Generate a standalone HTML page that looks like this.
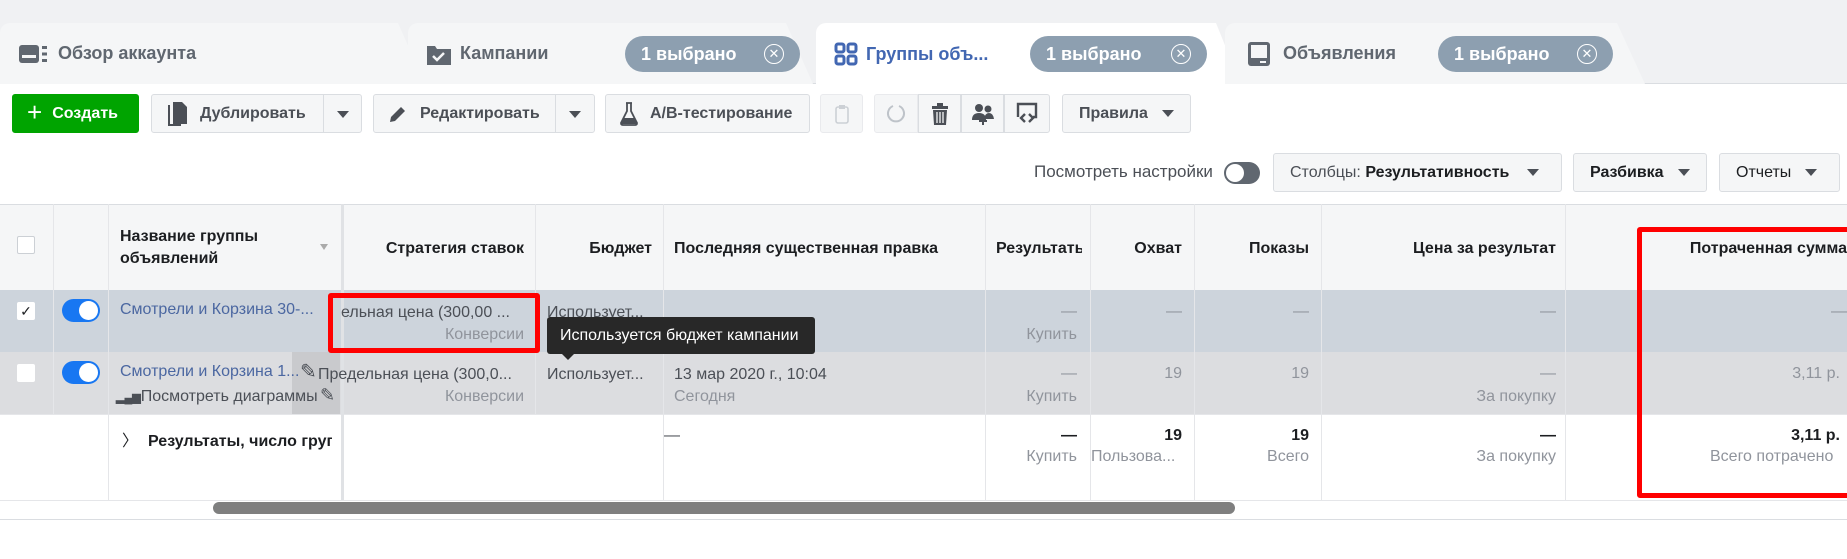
<!DOCTYPE html>
<html><head><meta charset="utf-8"><style>
*{box-sizing:border-box;margin:0;padding:0}
body{width:1847px;height:559px;overflow:hidden;background:#fff;font-family:"Liberation Sans",Arial,sans-serif;color:#1c1e21;position:relative}
.a{position:absolute}
.strip{left:0;top:0;width:1847px;height:84px;background:#f0f1f3;border-bottom:1px solid #dadde1}
.tab{top:23px;height:61px;background:#f5f6f7;border-radius:10px 10px 0 0;display:flex;align-items:center;font-size:18px;font-weight:bold;color:#606770}
.pill{top:36px;height:36px;border-radius:18px;background:#8d9fb0;color:#fff;font-size:18px;font-weight:bold;display:flex;align-items:center;padding-left:16px}
.pill .x{position:absolute;right:16px;top:8px;width:20px;height:20px;border:1.5px solid #fff;border-radius:50%;font-size:13px;line-height:17px;text-align:center;font-weight:normal}
.btn{top:94px;height:39px;background:#f5f6f7;border:1px solid #dadde1;border-radius:3px;display:flex;align-items:center;font-size:16px;font-weight:bold;color:#4b4f56}
.tri{display:inline-block;width:0;height:0;border-left:6px solid transparent;border-right:6px solid transparent;border-top:7px solid #4b4f56}
.btn2{top:153px;height:39px}
.hd{top:204px;height:86px;background:#f5f6f7;border-top:1px solid #dadde1}
.c{position:absolute;font-size:16px}
.vl{position:absolute;width:1px;background:#e5e6e9}
.r{text-align:right}
.g{color:#90949c}
</style></head><body>
<div class="a strip"></div>
<div class="a tab" style="left:0;width:425px;clip-path:polygon(0 0,398px 0,425px 100%,0 100%);padding-left:18px"><svg width="32" height="22" viewBox="0 0 32 22"><rect x="1" y="2" width="20" height="18" rx="3" fill="#606770"/><rect x="4" y="12" width="14" height="3" fill="#f5f6f7"/><rect x="24" y="3" width="5" height="3" fill="#606770"/><rect x="24" y="9.5" width="5" height="3" fill="#606770"/><rect x="24" y="16" width="5" height="3" fill="#606770"/></svg><span style="margin-left:8px">Обзор аккаунта</span></div>
<div class="a tab" style="left:408px;width:405px;clip-path:polygon(0 0,378px 0,405px 100%,0 100%);padding-left:18px"><svg width="26" height="24" viewBox="0 0 26 24"><path d="M1 4h8l2 3h14v16H1z" fill="#606770"/><path d="M7 14l4 4 7-7" stroke="#f5f6f7" stroke-width="2.5" fill="none"/></svg><span style="margin-left:8px">Кампании</span></div>
<div class="a pill" style="left:625px;width:175px">1 выбрано<span class="x">✕</span></div>
<div class="a tab" style="left:816px;width:425px;background:#fff;height:62px;clip-path:polygon(0 0,400px 0,425px 100%,0 100%);padding-left:18px;color:#4267b2"><svg width="24" height="24" viewBox="0 0 24 24" fill="none" stroke="#4267b2" stroke-width="3"><rect x="2" y="2" width="8" height="8" rx="2"/><rect x="14" y="2" width="8" height="8" rx="2"/><rect x="2" y="14" width="8" height="8" rx="2"/><rect x="14" y="14" width="8" height="8" rx="2"/></svg><span style="margin-left:8px">Группы объ...</span></div>
<div class="a pill" style="left:1030px;width:177px">1 выбрано<span class="x">✕</span></div>
<div class="a tab" style="left:1225px;width:420px;clip-path:polygon(0 0,392px 0,420px 100%,0 100%);padding-left:22px"><svg width="24" height="26" viewBox="0 0 24 26"><rect x="1" y="1" width="22" height="24" rx="3" fill="#606770"/><rect x="4" y="4" width="16" height="13" fill="#f5f6f7"/><rect x="13" y="20" width="6" height="2" fill="#f5f6f7"/></svg><span style="margin-left:12px">Объявления</span></div>
<div class="a pill" style="left:1438px;width:175px">1 выбрано<span class="x">✕</span></div>

<div class="a btn" style="left:12px;width:127px;background:#00a400;border-color:#00a400;color:#fff;padding-left:14px"><span style="font-size:26px;font-weight:normal;margin-right:10px;margin-top:-3px">+</span>Создать</div>
<div class="a btn" style="left:151px;width:211px"><div style="width:172px;display:flex;align-items:center;padding-left:14px;border-right:1px solid #dadde1;height:100%"><svg width="22" height="26" viewBox="0 0 22 26"><path d="M3 4v20h12" stroke="#4b4f56" stroke-width="2" fill="none"/><path d="M7 1h9l5 5v17H7z" fill="#4b4f56"/></svg><span style="margin-left:12px">Дублировать</span></div><div style="flex:1;text-align:center"><span class="tri"></span></div></div>
<div class="a btn" style="left:373px;width:222px"><div style="width:182px;display:flex;align-items:center;padding-left:14px;border-right:1px solid #dadde1;height:100%"><svg width="20" height="20" viewBox="0 0 20 20"><path d="M2 18l1-5 10-10 4 4-10 10z" fill="#4b4f56"/></svg><span style="margin-left:12px">Редактировать</span></div><div style="flex:1;text-align:center"><span class="tri"></span></div></div>
<div class="a btn" style="left:605px;width:205px;padding-left:14px"><svg width="18" height="24" viewBox="0 0 18 24"><path d="M6 1h6M7 1v8L1 21q0 2 2 2h12q2 0 2-2L11 9V1" stroke="#4b4f56" stroke-width="1.8" fill="none"/><path d="M3 16h12l2 6H1z" fill="#4b4f56"/></svg><span style="margin-left:12px">A/B-тестирование</span></div>
<div class="a btn" style="left:820px;width:43px;justify-content:center;border-color:#e9eaed"><svg width="14" height="20" viewBox="0 0 14 20"><rect x="1" y="3" width="12" height="16" rx="2" fill="none" stroke="#ccd0d5" stroke-width="1.6"/><rect x="4" y="1" width="6" height="4" fill="#ccd0d5"/></svg></div>
<div class="a btn" style="left:874px;width:44px;justify-content:center;border-color:#e9eaed;border-radius:3px 0 0 3px"><svg width="22" height="22" viewBox="0 0 22 22"><path d="M8 3A8 8 0 1 0 14 3" stroke="#bec3c9" stroke-width="2" fill="none"/></svg></div>
<div class="a btn" style="left:918px;width:43px;justify-content:center;border-radius:0"><svg width="18" height="22" viewBox="0 0 18 22"><rect x="1" y="3" width="16" height="3" fill="#4b4f56"/><rect x="6" y="0" width="6" height="3" fill="#4b4f56"/><path d="M2 7h14l-1 15H3z" fill="#4b4f56"/><path d="M6 9v11M9 9v11M12 9v11" stroke="#f5f6f7" stroke-width="1.3"/></svg></div>
<div class="a btn" style="left:961px;width:43px;justify-content:center;border-radius:0"><svg width="24" height="22" viewBox="0 0 24 22"><circle cx="8" cy="5" r="4" fill="#4b4f56"/><circle cx="17" cy="6" r="3.5" fill="#4b4f56"/><path d="M1 17q0-7 7-7t7 7zM13 16q1-6 5-6t5 6z" fill="#4b4f56"/><path d="M12 14v8M8 18h8" stroke="#4b4f56" stroke-width="2"/></svg></div>
<div class="a btn" style="left:1004px;width:46px;justify-content:center;border-radius:0 3px 3px 0"><svg width="24" height="24" viewBox="0 0 24 24"><path d="M3 15V2h18v13h-3" stroke="#4b4f56" stroke-width="2.4" fill="none"/><path d="M10 12l-4 4 4 4M14 12l4 4-4 4" stroke="#4b4f56" stroke-width="2.4" fill="none"/></svg></div>
<div class="a btn" style="left:1062px;width:129px;padding-left:16px">Правила<span class="tri" style="margin-left:14px"></span></div>

<div class="a" style="left:1034px;top:162px;font-size:17px;color:#4b4f56;white-space:nowrap">Посмотреть настройки</div>
<div class="a" style="left:1224px;top:162px;width:36px;height:22px;border-radius:11px;background:#606770"><div style="position:absolute;left:2px;top:2px;width:18px;height:18px;border-radius:50%;background:#fff"></div></div>
<div class="a btn btn2" style="left:1273px;width:289px;padding-left:16px;font-weight:normal;font-size:16px">Столбцы:&nbsp;<b style="color:#1c1e21">Результативность</b><span class="tri" style="margin-left:18px"></span></div>
<div class="a btn btn2" style="left:1573px;width:134px;padding-left:16px;font-size:16px;color:#1c1e21">Разбивка<span class="tri" style="margin-left:14px"></span></div>
<div class="a btn btn2" style="left:1719px;width:121px;padding-left:16px;font-size:16px;font-weight:normal;color:#1c1e21">Отчеты<span class="tri" style="margin-left:14px"></span></div>

<div class="a hd" style="left:0;width:1847px"></div>
<div class="a" style="left:0;top:290px;width:1847px;height:62px;background:#cdd4dc"></div>
<div class="a" style="left:0;top:352px;width:1847px;height:62px;background:#dcdde0"></div>
<div class="a" style="left:0;top:414px;width:1847px;height:1px;background:#e5e6e9"></div>
<div class="a" style="left:0;top:500px;width:1847px;height:1px;background:#e5e6e9"></div>
<div class="a" style="left:0;top:519px;width:1847px;height:1px;background:#dadde1"></div>
<div class="vl" style="left:53px;top:204px;height:210px"></div>
<div class="vl" style="left:108px;top:204px;height:296px"></div>
<div class="vl" style="left:341px;top:204px;height:296px;width:3px;background:#e0e2e5"></div>
<div class="vl" style="left:535px;top:204px;height:210px"></div>
<div class="vl" style="left:663px;top:204px;height:296px"></div>
<div class="vl" style="left:985px;top:204px;height:296px"></div>
<div class="vl" style="left:1090px;top:204px;height:296px"></div>
<div class="vl" style="left:1194px;top:204px;height:296px"></div>
<div class="vl" style="left:1321px;top:204px;height:296px"></div>
<div class="vl" style="left:1565px;top:204px;height:296px"></div>
<div class="a" style="left:292px;top:352px;width:48px;height:62px;background:#c9cacd"></div>

<div class="a" style="left:17px;top:236px;width:18px;height:18px;border:1px solid #ccd0d5;background:#fff;border-radius:2px"></div>
<div class="c" style="left:120px;top:226px;font-weight:bold;line-height:22px;color:#1c1e21">Название группы<br>объявлений</div>
<div class="a" style="left:320px;top:244px;border-left:4px solid transparent;border-right:4px solid transparent;border-top:6px solid #aaa"></div>
<div class="c r" style="left:344px;width:180px;top:240px;font-weight:bold">Стратегия ставок</div>
<div class="c r" style="left:536px;width:116px;top:240px;font-weight:bold">Бюджет</div>
<div class="c" style="left:674px;top:240px;font-weight:bold;width:310px;overflow:hidden;white-space:nowrap">Последняя существенная правка</div>
<div class="c" style="left:996px;top:240px;font-weight:bold;width:86px;overflow:hidden;white-space:nowrap">Результаты</div>
<div class="c r" style="left:1090px;width:92px;top:240px;font-weight:bold">Охват</div>
<div class="c r" style="left:1194px;width:115px;top:240px;font-weight:bold">Показы</div>
<div class="c r" style="left:1321px;width:235px;top:240px;font-weight:bold">Цена за результат</div>
<div class="c r" style="left:1565px;width:282px;top:240px;font-weight:bold;white-space:nowrap">Потраченная сумма</div>

<div class="a" style="left:17px;top:302px;width:18px;height:18px;background:#fff;border-radius:2px;font-size:14px;text-align:center;line-height:18px">✓</div>
<div class="a" style="left:62px;top:299px;width:38px;height:23px;border-radius:12px;background:#1877f2"><div style="position:absolute;right:2px;top:2px;width:19px;height:19px;border-radius:50%;background:#fff"></div></div>
<div class="c" style="left:120px;top:301px;color:#4b67a1;white-space:nowrap">Смотрели и Корзина 30-...</div>
<div class="c" style="left:341px;top:304px;color:#4b4f56;white-space:nowrap">ельная цена (300,00 ...</div>
<div class="c r g" style="left:344px;width:180px;top:326px">Конверсии</div>
<div class="c" style="left:547px;top:304px;color:#4b4f56">Использует...</div>
<div class="c r g" style="left:985px;width:92px;top:303px">—</div>
<div class="c r g" style="left:985px;width:92px;top:326px">Купить</div>
<div class="c r g" style="left:1090px;width:92px;top:303px">—</div>
<div class="c r g" style="left:1194px;width:115px;top:303px">—</div>
<div class="c r g" style="left:1321px;width:235px;top:303px">—</div>
<div class="c r g" style="left:1565px;width:282px;top:303px">—</div>

<div class="a" style="left:17px;top:364px;width:18px;height:18px;background:#fff;border-radius:2px"></div>
<div class="a" style="left:62px;top:361px;width:38px;height:23px;border-radius:12px;background:#1877f2"><div style="position:absolute;right:2px;top:2px;width:19px;height:19px;border-radius:50%;background:#fff"></div></div>
<div class="c" style="left:120px;top:363px;color:#4b67a1;white-space:nowrap">Смотрели и Корзина 1...</div>
<div class="c" style="left:116px;top:388px;color:#4b4f56;white-space:nowrap"><span style="font-size:11px;font-weight:bold">▂▄▆</span>Посмотреть диаграммы</div>
<div class="c" style="left:300px;top:359px;color:#4b4f56;font-size:20px">✎</div>
<div class="c" style="left:320px;top:385px;color:#4b4f56;font-size:18px">✎</div>
<div class="c" style="left:318px;top:366px;color:#4b4f56;white-space:nowrap">Предельная цена (300,0...</div>
<div class="c r g" style="left:344px;width:180px;top:388px">Конверсии</div>
<div class="c" style="left:547px;top:366px;color:#4b4f56">Использует...</div>
<div class="c" style="left:674px;top:366px;color:#4b4f56">13 мар 2020 г., 10:04</div>
<div class="c g" style="left:674px;top:388px">Сегодня</div>
<div class="c r g" style="left:985px;width:92px;top:365px">—</div>
<div class="c r g" style="left:985px;width:92px;top:388px">Купить</div>
<div class="c r g" style="left:1090px;width:92px;top:365px">19</div>
<div class="c r g" style="left:1194px;width:115px;top:365px">19</div>
<div class="c r g" style="left:1321px;width:235px;top:365px">—</div>
<div class="c r g" style="left:1321px;width:235px;top:388px">За покупку</div>
<div class="c r g" style="left:1565px;width:275px;top:365px">3,11 р.</div>

<div class="c" style="left:122px;top:427px;font-weight:bold;width:210px;white-space:nowrap;overflow:hidden"><span style="font-weight:normal;margin-right:10px">〉</span>Результаты, число групп</div>
<div class="c" style="left:664px;top:427px;color:#4b4f56">—</div>
<div class="c r" style="left:985px;width:92px;top:427px;font-weight:bold">—</div>
<div class="c r g" style="left:985px;width:92px;top:448px">Купить</div>
<div class="c r" style="left:1090px;width:92px;top:427px;font-weight:bold">19</div>
<div class="c g" style="left:1091px;top:448px">Пользова...</div>
<div class="c r" style="left:1194px;width:115px;top:427px;font-weight:bold">19</div>
<div class="c r g" style="left:1194px;width:115px;top:448px">Всего</div>
<div class="c r" style="left:1321px;width:235px;top:427px;font-weight:bold">—</div>
<div class="c r g" style="left:1321px;width:235px;top:448px">За покупку</div>
<div class="c r" style="left:1565px;width:275px;top:427px;font-weight:bold">3,11 р.</div>
<div class="c g" style="left:1710px;top:448px;white-space:nowrap">Всего потрачено</div>

<div class="a" style="left:213px;top:502px;width:1022px;height:12px;border-radius:6px;background:#7f7f7f"></div>

<div class="a" style="left:547px;top:317px;width:268px;height:37px;background:#282828;border-radius:3px;color:#fff;font-size:16px;line-height:37px;padding-left:13px;white-space:nowrap">Используется бюджет кампании</div>
<div class="a" style="left:562px;top:354px;border-left:6px solid transparent;border-right:6px solid transparent;border-top:6px solid #282828"></div>

<div class="a" style="left:328px;top:293px;width:212px;height:60px;border:5px solid #f00;border-radius:3px"></div>
<div class="a" style="left:1637px;top:227px;width:215px;height:271px;border:5px solid #f00;border-radius:3px"></div>
</body></html>
